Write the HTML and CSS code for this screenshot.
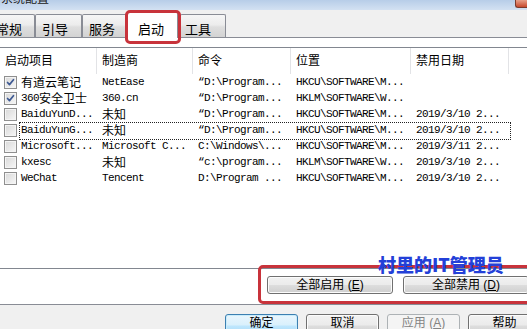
FILE: index.html
```html
<!DOCTYPE html>
<html lang="zh-CN">
<head>
<meta charset="utf-8">
<title>系统配置</title>
<link rel="stylesheet" href="styles.css">
</head>
<body>
<div class="window">
  <div class="titlebar">
    <span class="title">系统配置</span>
    <span class="close"></span>
  </div>
  <div class="tabstrip">
    <div class="tab t1">常规</div>
    <div class="tab t2">引导</div>
    <div class="tab t3">服务</div>
    <div class="tab sel">启动</div>
    <div class="tab t5">工具</div>
  </div>
  <div class="panel">
    <div class="listview">
      <div class="row head">
        <div class="cell c1">启动项目</div>
        <div class="cell">制造商</div>
        <div class="cell">命令</div>
        <div class="cell">位置</div>
        <div class="cell">禁用日期</div>
        <div class="cell last"></div>
      </div>
      <div class="row">
        <div class="cell c1"><span class="cb on"><svg viewBox="0 0 13 13"><path d="M3 6.5L5.3 9L10 3.2"/></svg></span><span class="zh">有道云笔记</span></div>
        <div class="cell">NetEase</div>
        <div class="cell">“D:\Program...</div>
        <div class="cell">HKCU\SOFTWARE\M...</div>
        <div class="cell"></div>
        <div class="cell last"></div>
      </div>
      <div class="row">
        <div class="cell c1"><span class="cb on"><svg viewBox="0 0 13 13"><path d="M3 6.5L5.3 9L10 3.2"/></svg></span>360<span class="zh">安全卫士</span></div>
        <div class="cell">360.cn</div>
        <div class="cell">“D:\Program...</div>
        <div class="cell">HKLM\SOFTWARE\W...</div>
        <div class="cell"></div>
        <div class="cell last"></div>
      </div>
      <div class="row">
        <div class="cell c1"><span class="cb"></span>BaiduYunD...</div>
        <div class="cell"><span class="zh">未知</span></div>
        <div class="cell">“D:\Program...</div>
        <div class="cell">HKCU\SOFTWARE\M...</div>
        <div class="cell">2019/3/10 2...</div>
        <div class="cell last"></div>
      </div>
      <div class="row focus">
        <div class="cell c1"><span class="cb"></span>BaiduYunG...</div>
        <div class="cell"><span class="zh">未知</span></div>
        <div class="cell">“D:\Program...</div>
        <div class="cell">HKCU\SOFTWARE\M...</div>
        <div class="cell">2019/3/10 2...</div>
        <div class="cell last"></div>
      </div>
      <div class="row">
        <div class="cell c1"><span class="cb"></span>Microsoft...</div>
        <div class="cell">Microsoft C...</div>
        <div class="cell">C:\Windows\...</div>
        <div class="cell">HKCU\SOFTWARE\M...</div>
        <div class="cell">2019/3/11 2...</div>
        <div class="cell last"></div>
      </div>
      <div class="row">
        <div class="cell c1"><span class="cb"></span>kxesc</div>
        <div class="cell"><span class="zh">未知</span></div>
        <div class="cell">“c:\program...</div>
        <div class="cell">HKLM\SOFTWARE\W...</div>
        <div class="cell">2019/3/10 2...</div>
        <div class="cell last"></div>
      </div>
      <div class="row">
        <div class="cell c1"><span class="cb"></span>WeChat</div>
        <div class="cell">Tencent</div>
        <div class="cell">D:\Program ...</div>
        <div class="cell">HKCU\SOFTWARE\M...</div>
        <div class="cell">2019/3/10 2...</div>
        <div class="cell last"></div>
      </div>
    </div>
    <div class="actions">
      <button class="btn wide">全部启用 (<u>E</u>)</button>
      <button class="btn wide">全部禁用 (<u>D</u>)</button>
    </div>
  </div>
  <div class="footer">
    <button class="btn default">确定</button>
    <button class="btn">取消</button>
    <button class="btn disabled">应用 (<u>A</u>)</button>
    <button class="btn">帮助</button>
  </div>
  <div class="hl hl-tab"></div>
  <div class="hl hl-actions"></div>
  <div class="watermark">村里的IT管理员</div>
</div>
</body>
</html>
```

FILE: styles.css
```css
* { box-sizing: border-box; }
html, body { margin: 0; padding: 0; }
body {
  width: 527px;
  height: 329px;
  overflow: hidden;
  font-family: "Liberation Sans", "Noto Sans CJK SC", sans-serif;
  font-size: 12px;
  color: #000;
}
.window {
  position: relative;
  width: 527px;
  height: 329px;
  overflow: hidden;
  background: #f0f0f0;
}
.titlebar {
  height: 10px;
  overflow: hidden;
  display: flex;
  justify-content: space-between;
  align-items: flex-start;
  background: linear-gradient(#b7cde8, #d3e1f2);
}
.title {
  margin-top: -7px;
  margin-left: 1px;
  font-size: 12px;
  line-height: 12px;
  color: #1a1a1a;
}
.close {
  width: 12px;
  height: 8px;
  border: 1px solid #7a3a2c;
  border-top: none;
  border-right: none;
  border-radius: 0 0 0 3px;
  background: linear-gradient(#e8a08a, #c74a2e);
}
.tabstrip {
  height: 27px;
  display: flex;
  align-items: flex-end;
  position: relative;
  z-index: 1;
}
.tab {
  height: 23px;
  border: 1px solid #898c95;
  border-bottom: none;
  border-radius: 2px 2px 0 0;
  background: linear-gradient(#f6f6f6, #ececec 45%, #dedede 55%, #d3d3d3);
  font-size: 13px;
  line-height: 15px;
  padding-top: 7px;
  padding-left: 6px;
  white-space: nowrap;
}
.t1 { width: 47px; margin-left: -12px; padding-left: 7px; }
.t2 { width: 47px; }
.t3 { width: 45px; }
.t5 { width: 46px; margin-left: 2px; padding-left: 4px; }
.sel {
  width: 51px;
  height: 27px;
  margin-bottom: -1px;
  background: #fff;
  padding-top: 10px;
  padding-left: 10px;
}
.panel {
  border-top: 1px solid #898c95;
  border-bottom: 1px solid #898c95;
  background: #fff;
  padding-top: 9px;
}
.listview {
  height: 222px;
  border-top: 1px solid #828790;
  border-bottom: 1px solid #828790;
  background: #fff;
}
.row {
  display: grid;
  grid-template-columns: 97px 96px 98px 120px 98px 1fr;
  height: 16px;
  line-height: 16px;
  font-family: "Liberation Mono", "Noto Sans CJK SC", monospace;
  font-size: 11px;
  letter-spacing: -0.6px;
  position: relative;
}
.row.head {
  height: 26px;
  line-height: 26px;
  font-family: "Liberation Sans", "Noto Sans CJK SC", sans-serif;
  font-size: 12px;
  letter-spacing: 0;
}
.head .cell { border-right: 1px solid #e2e3e6; }
.head .cell.last { border-right: none; }
.cell {
  padding-left: 5px;
  white-space: nowrap;
  overflow: hidden;
  display: flex;
  align-items: center;
}
.cell.c1 { padding-left: 4px; }
.head .cell.c1 { padding-left: 5px; }
.zh {
  font-family: "Noto Sans CJK SC", sans-serif;
  font-size: 12px;
  letter-spacing: 0;
}
.cb {
  flex: none;
  width: 13px;
  height: 13px;
  margin-right: 4px;
  border: 1px solid #8f8f8f;
  background: linear-gradient(135deg, #d8d8d8, #f7f7f7);
  box-shadow: inset 0 0 0 1px #f4f4f4;
  display: flex;
}
.cb svg { width: 11px; height: 11px; }
.cb path {
  fill: none;
  stroke: #3f5a93;
  stroke-width: 2;
  stroke-linecap: round;
  stroke-linejoin: round;
}
.row.focus::after {
  content: "";
  position: absolute;
  left: 19px;
  top: 0;
  width: 490px;
  height: 16px;
  border: 1px dotted #222;
}
.actions {
  height: 35px;
  padding-top: 7px;
  padding-left: 267px;
  display: flex;
  gap: 10px;
}
.btn {
  flex: none;
  width: 73px;
  height: 23px;
  padding: 0;
  border: 1px solid #707070;
  border-radius: 3px;
  background: linear-gradient(#f2f2f2, #ebebeb 48%, #dddddd 52%, #cfcfcf);
  box-shadow: inset 0 0 0 1px #fcfcfc;
  font-family: "Liberation Sans", "Noto Sans CJK SC", sans-serif;
  font-size: 12px;
  color: #000;
  line-height: 16px;
}
.btn u { text-decoration: underline; }
.btn.wide { width: 126px; height: 18px; line-height: 14px; }
.footer .btn { padding-bottom: 6px; }
.btn.default {
  border-color: #3c7fb1;
  background: linear-gradient(#eaf6fd, #d9f0fc 48%, #bee6fd 52%, #a7d9f5);
  box-shadow: inset 0 0 0 1px #c9ecfb;
}
.btn.disabled {
  border-color: #adb2b5;
  background: #f4f4f4;
  color: #838383;
  box-shadow: none;
}
.footer {
  height: 24px;
  padding-top: 9px;
  padding-left: 225px;
  display: flex;
  gap: 8px;
}
.hl {
  position: absolute;
  border: 3px solid #c8333b;
  border-radius: 5px;
  z-index: 2;
}
.hl-tab { left: 125px; top: 10px; width: 56px; height: 34px; }
.hl-actions { left: 258px; top: 265px; width: 290px; height: 39px; }
.watermark {
  position: absolute;
  left: 378px;
  top: 255px;
  z-index: 3;
  font-family: "Noto Sans CJK SC", sans-serif;
  font-weight: 900;
  font-size: 18px;
  line-height: 18px;
  color: #2340d8;
  letter-spacing: 0;
}
```
